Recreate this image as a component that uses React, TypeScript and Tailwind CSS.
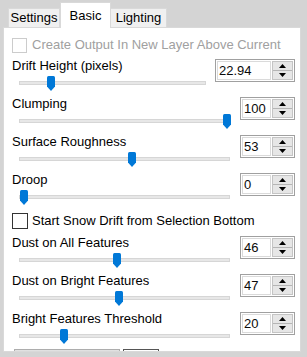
import React from 'react'

type Row = {
  label: string
  value: string
  thumb: number
  wide?: boolean
}

const rowsTop: Row[] = [
  { label: 'Drift Height (pixels)', value: '22.94', thumb: 47, wide: true },
  { label: 'Clumping', value: '100', thumb: 223 },
  { label: 'Surface Roughness', value: '53', thumb: 128 },
  { label: 'Droop', value: '0', thumb: 20 },
]

const rowsBottom: Row[] = [
  { label: 'Dust on All Features', value: '46', thumb: 113 },
  { label: 'Dust on Bright Features', value: '47', thumb: 115 },
  { label: 'Bright Features Threshold', value: '20', thumb: 60 },
]

function Thumb() {
  return (
    <svg width="8" height="15" viewBox="0 0 8 15" className="block">
      <path d="M1.5 0 H6.5 Q8 0 8 1.5 V10.5 L4 15 L0 10.5 V1.5 Q0 0 1.5 0 Z" fill="#0078d7" />
    </svg>
  )
}

function SpinBox({ value, wide }: { value: string; wide?: boolean }) {
  return (
    <div
      className={
        (wide ? 'w-[80px]' : 'w-[55px]') +
        ' h-[23px] flex border border-[#a0a0a0] bg-white p-[1px]'
      }
    >
      <div className="flex-1 h-full border border-[#dadada] flex items-center pl-[1px] text-[13px] leading-none text-[#0a0a0a]">
        {value}
      </div>
      <div className="w-[21px] h-full flex flex-col bg-[#e6e6e6] border border-[#c4c4c4] ml-[1px]">
        <div className="flex-1 flex items-center justify-center border-b border-[#b5b5b5]">
          <svg width="7" height="4" viewBox="0 0 7 4">
            <path d="M0 4 L3.5 0 L7 4 Z" fill="#000" />
          </svg>
        </div>
        <div className="flex-1 flex items-center justify-center">
          <svg width="7" height="4" viewBox="0 0 7 4">
            <path d="M0 0 L7 0 L3.5 4 Z" fill="#000" />
          </svg>
        </div>
      </div>
    </div>
  )
}

function SliderRow({ row }: { row: Row }) {
  const trackW = row.wide ? 187 : 211
  return (
    <div className="h-[38px] flex items-start">
      <div className="flex-1 flex flex-col">
        <div className="h-[16px] leading-[16px] text-[13px] text-black whitespace-nowrap">{row.label}</div>
        <div className="relative h-[18px]">
          <div
            className="absolute top-[7px] left-[7px] h-[4px] bg-[#e7e7e7] border border-[#d6d6d6]"
            style={{ width: trackW }}
          />
          <div className="absolute top-[2px]" style={{ left: row.thumb - 12 }}>
            <Thumb />
          </div>
        </div>
      </div>
      <div className="mt-[1px]">
        <SpinBox value={row.value} wide={row.wide} />
      </div>
    </div>
  )
}

export default function App() {
  return (
    <div
      className="w-[307px] h-[357px] bg-[#d4d4d4] overflow-hidden text-black"
      style={{ fontFamily: '"Liberation Sans", Arial, sans-serif' }}
    >
      {/* Tabs */}
      <div className="h-[27px] flex items-end pl-[8px] text-[13px]">
        <div className="w-[52px] h-[19px] bg-[#f0f0f0] border border-b-0 border-[#d9d9d9] flex items-center justify-center">
          Settings
        </div>
        <div className="w-[51px] h-[26px] -mb-[1px] bg-white border border-b-0 border-[#d9d9d9] flex items-start justify-center pt-[3px] relative z-10">
          Basic
        </div>
        <div className="w-[56px] h-[19px] bg-[#f0f0f0] border border-b-0 border-l-0 border-[#d9d9d9] flex items-center justify-center">
          Lighting
        </div>
      </div>

      {/* Panel */}
      <div className="ml-[3px] w-[298px] h-[325px] bg-white border border-[#d9d9d9] overflow-hidden pl-[8px] pr-[5px] pt-[8px]">
        <div className="h-[18px] flex items-center gap-[5px]">
          <div className="w-[15px] h-[15px] border border-[#cccccc] bg-white" />
          <span className="text-[13px] text-[#a0a0a0] whitespace-nowrap">Create Output In New Layer Above Current</span>
        </div>
        <div className="h-[4px]" />
        {rowsTop.map((r) => (
          <SliderRow key={r.label} row={r} />
        ))}
        <div className="h-[25px] flex items-start pt-[3px] gap-[4px]">
          <div className="w-[16px] h-[16px] border border-[#333333] bg-white" />
          <span className="text-[13px] leading-[16px] whitespace-nowrap">Start Snow Drift from Selection Bottom</span>
        </div>
        {rowsBottom.map((r) => (
          <SliderRow key={r.label} row={r} />
        ))}
        <div className="flex items-start pl-[2px] gap-[3px]">
          <div className="w-[106px] h-[22px] bg-[#e1e1e1] border border-[#adadad]" />
          <div className="w-[36px] h-[22px] border border-[#555555] p-[1px]">
            <div className="w-full h-full border border-[#999999]" />
          </div>
        </div>
      </div>
    </div>
  )
}
